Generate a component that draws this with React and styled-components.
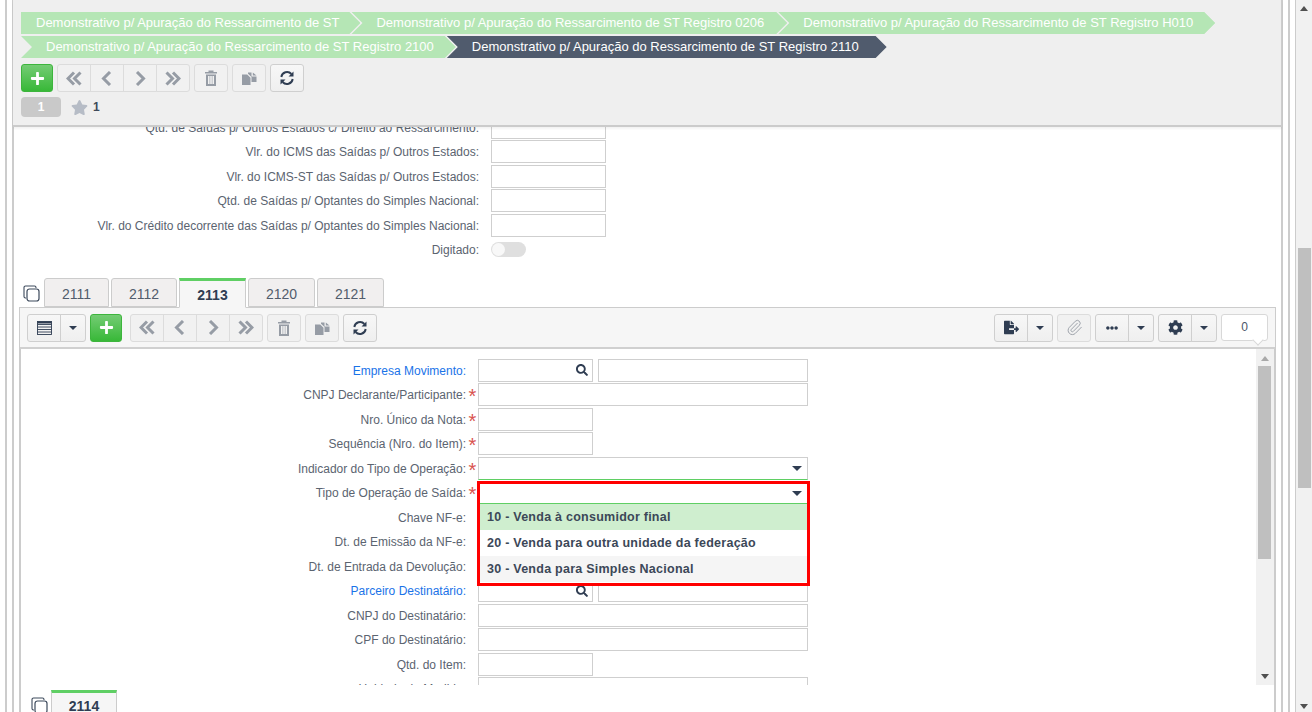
import React from "react";
import styled, { createGlobalStyle } from "styled-components";
import { FaCog, FaEllipsisH, FaFileExport, FaPlus, FaSearch, FaStar } from "react-icons/fa";
import { Paperclip } from "lucide-react";

const Global = createGlobalStyle`
  html, body { margin: 0; padding: 0; overflow: hidden; background: #fff; }
  * { box-sizing: border-box; }
  body { font-family: "Liberation Sans", Arial, sans-serif; font-size: 12px; color: #5b6470; }
`;

const Page = styled.div`
  width: 1312px; height: 712px; display: flex; overflow: hidden; background: #fff;
`;
const PageBody = styled.div`flex: 1; min-width: 0; padding-left: 5px; display: flex;`;
const FrameOuter = styled.div`
  flex: 1; min-width: 0; display: flex; padding: 0 5px;
  border-left: 2px solid #ccc; border-right: 1px solid #ccc;
`;
const FrameMiddle = styled.div`
  flex: 1; min-width: 0; display: flex; padding-right: 5px;
  border-left: 2px solid #ccc; border-right: 2px solid #ccc;
`;
const FrameInner = styled.div`
  flex: 1; min-width: 0; display: flex; flex-direction: column; border-right: 2px solid #ccc;
`;

const PageScroll = styled.div`
  width: 16px; position: relative; background: #f1f1f1; flex: none;
`;
const PageThumb = styled.div`
  position: absolute; left: 2px; top: 248px; width: 13px; height: 240px; background: #bfbfbf;
`;
const Arrow = styled.div`
  position: absolute; left: ${p => p.$left}px;
  ${p => p.$up ? `top: ${p.$offset}px;` : `bottom: ${p.$offset}px;`}
  width: 0; height: 0; border-left: 4px solid transparent; border-right: 4px solid transparent;
  ${p => p.$up ? `border-bottom: 5px solid ${p.$color};` : `border-top: 5px solid ${p.$color};`}
`;

const Header = styled.header`
  height: 127px; flex: none; margin: 0 -1px 0 -1px; padding: 12px 0 0 8px; background: #efefef;
  border-bottom: 2px solid #cbcbcb; border-right: 1px solid #ccc;
  box-shadow: 0 2px 2px rgba(0,0,0,.05); position: relative; z-index: 2;
`;
const Crumbs = styled.div`display: flex; margin-bottom: 2px;`;
const Crumb = styled.div`
  height: 22px; line-height: 22px; font-size: 13px; white-space: nowrap; color: #fff;
  background: ${p => p.$active ? "#505b6d" : "#b5e6b5"};
  padding: 0 ${p => p.$pr || 21}px 0 ${p => p.$flat ? 15 : 25}px;
  margin-left: ${p => p.$first ? 0 : -9}px;
  clip-path: ${p => p.$flat
    ? "polygon(0 0, calc(100% - 11px) 0, 100% 50%, calc(100% - 11px) 100%, 0 100%)"
    : "polygon(0 0, calc(100% - 11px) 0, 100% 50%, calc(100% - 11px) 100%, 0 100%, 11px 50%)"};
`;
const Toolbar = styled.div`
  display: flex; gap: 4px; align-items: flex-start; margin-top: 6px;
`;
const BtnGroup = styled.div`display: flex;`;
const Btn = styled.button`
  width: ${p => p.$w || 34}px; height: 28px; padding: 0; display: flex; align-items: center; justify-content: center;
  background: ${p => p.$muted ? "#f1f1f1" : "linear-gradient(#f7f7f7, #efefef)"};
  border: 1px solid ${p => p.$muted ? "#dcdcdc" : "#cfcfcf"}; border-radius: 3px;
  color: ${p => p.$muted ? "#969ca5" : "#2f3d52"}; font-size: ${p => p.$fs || 15}px;
  ${BtnGroup} > & { border-radius: 0; margin-left: -1px; }
  ${BtnGroup} > &:first-child { border-radius: 3px 0 0 3px; margin-left: 0; }
  ${BtnGroup} > &:last-child { border-radius: 0 3px 3px 0; }
`;
const AddBtn = styled.button`
  width: 32px; height: 28px; padding: 0; display: flex; align-items: center; justify-content: center;
  border: 1px solid #3db53d; border-radius: 3px; color: #fff; font-size: 15px;
  background: linear-gradient(#74cc74, #38b838);
`;
const Caret = styled.span`
  width: 0; height: 0; border-left: 4px solid transparent; border-right: 4px solid transparent;
  border-top: 4px solid #2f3d52; display: block;
`;
const SelectCaret = styled(Caret)`
  border-left-width: 5.5px; border-right-width: 5.5px; border-top-width: 5px;
`;
const Spacer = styled.div`flex: 1;`;
const NavGap = styled.div`width: 0; flex: none;`;
const CountBox = styled.div`
  width: 47px; height: 27px; background: #fff; border: 1px solid #d8d8d8; border-radius: 3px; position: relative;
  display: flex; align-items: center; justify-content: center; color: #4a5668; font-size: 12px;
  &::after {
    content: ""; position: absolute; left: 32px; bottom: -4px; width: 7px; height: 7px; background: #fff;
    border-right: 1px solid #d8d8d8; border-bottom: 1px solid #d8d8d8; transform: rotate(45deg);
  }
`;
const StatusRow = styled.div`display: flex; align-items: center; margin-top: 5px; height: 20px;`;
const Badge = styled.div`
  width: 40px; height: 20px; border-radius: 4px; background: #c9c9c9; color: #fff; font-weight: bold;
  display: flex; align-items: center; justify-content: center; font-size: 12px;
`;
const StarBox = styled.div`
  margin-left: 10px; display: flex; align-items: center; gap: 5px; color: #3f4a5a; font-weight: bold; font-size: 12px;
  svg { color: #b6bcc6; font-size: 17px; }
`;

const Content = styled.main`
  flex: 1; min-height: 0; overflow: hidden; background: #fff; display: flex; flex-direction: column;
  position: relative; z-index: 1;
`;
const UpperForm = styled.section`margin-top: -12px; flex: none;`;
const UpperRow = styled.div`height: 24.5px; display: flex; align-items: center;`;
const UpperLabel = styled.label`
  width: 465px; text-align: right; flex: none; padding-top: ${p => p.$flush ? 0 : 1}px;
`;
const UpperInput = styled.div`
  width: 115px; height: 23px; margin-left: 12px; border: 1px solid #cfcfcf; background: #fff;
`;
const Toggle = styled.div`
  width: 35px; height: 15px; margin-left: 12px; border-radius: 8px; background: #dfdfdf;
  position: relative;
  &::after {
    content: ""; position: absolute; left: 1px; top: 1px; width: 13px; height: 13px; border-radius: 50%; background: #f8f8f8;
  }
`;
const TabStrip = styled.div`
  height: ${p => p.$h || 29}px; flex: none; display: flex; align-items: flex-start; gap: ${p => p.$gap || 2}px;
  margin: ${p => p.$mt || 0}px 0 0 ${p => p.$ml || 0}px;
  position: relative; z-index: 1;
`;
const CopyGlyph = styled.svg`width: 17px; height: 17px; margin: 7px 2px 0 0; flex: none; color: #3d4a5c;`;
const Tab = styled.div`
  height: ${p => p.$h || (p.$active ? 30 : 29)}px; width: ${p => p.$w || 66}px; border: 1px solid #ccc; border-radius: 3px 3px 0 0;
  display: flex; align-items: center; justify-content: center; font-size: 14px; padding-top: ${p => p.$pt || (p.$active ? 2 : 4)}px;
  color: ${p => p.$active ? "#2f3d52" : "#515c6c"}; font-weight: ${p => p.$active ? "bold" : "normal"};
  background: ${p => p.$active ? "#f6f6f6" : "#f1efef"};
  border-bottom-color: ${p => p.$active ? "transparent" : "#ccc"};
  ${p => p.$active ? "border-top: 3px solid #5fcf64; border-radius: 0;" : ""}
`;
const Panel = styled.section`
  flex: 1; min-height: 0; margin: 0 5px; border: 2px solid #ccc; border-top: 1px solid #ccc; border-bottom: 0;
  display: flex; flex-direction: column;
`;
const PanelBar = styled.div`
  height: 41px; flex: none; padding: 6px 7px 0 7px; background: #f6f6f6; border-bottom: 2px solid #d0d0d0; display: flex; gap: 4px; align-items: flex-start;
  margin: 0 -1px 0 -1px;
`;
const Viewport = styled.div`height: 336px; flex: none; display: flex; overflow: hidden;`;
const FormArea = styled.div`flex: 1; min-width: 0; position: relative; overflow: hidden; padding-top: 10px;`;
const Row = styled.div`height: 24.5px; display: flex; align-items: flex-start;`;
const FieldLabel = styled.label`
  width: 445px; flex: none; text-align: right; line-height: 25px; color: ${p => p.$link ? "#1a73e8" : "#5b6470"};
`;
const Required = styled.span`
  width: 12px; flex: none; color: #d9534f; font-size: 20px; line-height: 27px; height: 23px; padding-left: 2.5px;
`;
const Field = styled.div`
  width: ${p => p.$w}px; height: 23px; border: 1px solid #cfcfcf; background: #fff; position: relative; flex: none;
  margin-left: ${p => p.$ml || 0}px; display: flex; align-items: center; justify-content: flex-end;
  padding-right: ${p => p.$pr || 0}px; color: #2f3d52; font-size: 12px;
  ${p => p.$focus ? "border-bottom-color: #5fcf64;" : ""}
`;
const Track = styled.div`width: 18px; flex: none; background: #f1f1f1; position: relative;`;
const Thumb = styled.div`position: absolute; left: 2px; top: 17px; width: 13px; height: 193px; background: #bfbfbf;`;
const Dropdown = styled.div`
  position: absolute; left: 456px; top: 132px; width: 333px; height: 105px; border: 3px solid #f00; background: #fff; z-index: 3;
`;
const DropHead = styled.div`
  height: 20px; border-bottom: 1px solid #5fcf64; display: flex; align-items: center; justify-content: flex-end; padding-right: 5px;
`;
const Option = styled.div`
  height: 26px; line-height: 26px; padding-left: 7px; font-weight: bold; font-size: 12.5px; letter-spacing: .25px; color: #3c4858;
  background: ${p => p.$bg || "#fff"};
`;

const TableGlyph = () => (
  <svg width="15" height="14" viewBox="0 0 15 14" fill="none" stroke="#2f3d52" strokeWidth=".9">
    <rect x=".5" y=".5" width="14" height="13" />
    <path d="M.5 3.5h14M.5 6h14M.5 8.5h14M.5 11h14" />
    <path d="M.5 1.5h14" strokeWidth="2" />
  </svg>
);
const Copy2 = () => (
  <CopyGlyph viewBox="0 0 17 17" fill="none" stroke="currentColor" strokeWidth="1.1">
    <path d="M3 13 H2.5 A1.5 1.5 0 0 1 1 11.5 V2.5 A1.5 1.5 0 0 1 2.5 1 H11.5 A1.5 1.5 0 0 1 13 2.5 V3" />
    <rect x="4" y="4" width="12" height="12" rx="2.5" strokeWidth="1.2" />
  </CopyGlyph>
);
const Chevron = ({ dir, double }) => {
  const flip = dir === "left" ? "translate(16 0) scale(-1 1)" : undefined;
  return (
    <svg width="16" height="15" viewBox="0 0 16 15" fill="none" stroke="currentColor" strokeWidth="3">
      <g transform={flip}>
        {double ? (
          <>
            <path d="M1.5 1.5 L7.5 7.5 L1.5 13.5" />
            <path d="M8 1.5 L14 7.5 L8 13.5" />
          </>
        ) : (
          <path d="M5 1 L11.5 7.5 L5 14" />
        )}
      </g>
    </svg>
  );
};
const TrashGlyph = () => (
  <svg width="14" height="16" viewBox="0 0 14 16" fill="currentColor">
    <path d="M4.5 0.5h5v1.5H13v1.5H1V2h3.5z" />
    <path fillRule="evenodd" d="M2 4.5h10V16H2z M4 6v8h1.6V6z M6.2 6v8h1.6V6z M8.4 6v8H10V6z" />
  </svg>
);
const DocsGlyph = () => (
  <svg width="15" height="14" viewBox="0 0 15 14" fill="currentColor">
    <path d="M0 3.5h5.2L8.5 6.8V14H0z" />
    <path d="M6 1.5 H9.5 V5.5 H14.5 V11 H9.5 V6 L6 2.8z" />
    <path d="M10.8 1.5 L14.5 4.4 H10.8z" />
  </svg>
);
const RefreshGlyph = () => (
  <svg width="16" height="16" viewBox="0 0 16 16" fill="none" stroke="currentColor" strokeWidth="1.9">
    <path d="M2.3 7 A5.8 5.8 0 0 1 12.4 4" />
    <path d="M13.7 9 A5.8 5.8 0 0 1 3.6 12" />
    <path d="M14.5 1.5v5h-5z M1.5 14.5v-5h5z" fill="currentColor" stroke="none" />
  </svg>
);
const Nav = () => (
  <BtnGroup>
    <Btn $muted><Chevron dir="left" double /></Btn>
    <Btn $muted><Chevron dir="left" /></Btn>
    <Btn $muted><Chevron dir="right" /></Btn>
    <Btn $muted><Chevron dir="right" double /></Btn>
  </BtnGroup>
);
const Actions = () => (
  <>
    <Btn $muted><TrashGlyph /></Btn>
    <Btn $muted><DocsGlyph /></Btn>
    <Btn><RefreshGlyph /></Btn>
  </>
);

const upper = [
  "Qtd. de Saídas p/ Outros Estados c/ Direito ao Ressarcimento:",
  "Vlr. do ICMS das Saídas p/ Outros Estados:",
  "Vlr. do ICMS-ST das Saídas p/ Outros Estados:",
  "Qtd. de Saídas p/ Optantes do Simples Nacional:",
  "Vlr. do Crédito decorrente das Saídas p/ Optantes do Simples Nacional:",
];
const W = 330, S = 115;
const rows = [
  { l: "Empresa Movimento:", link: true, lookup: true },
  { l: "CNPJ Declarante/Participante:", req: true, w: W },
  { l: "Nro. Único da Nota:", req: true, w: S },
  { l: "Sequência (Nro. do Item):", req: true, w: S },
  { l: "Indicador do Tipo de Operação:", req: true, w: W, select: true },
  { l: "Tipo de Operação de Saída:", req: true, w: W, select: true },
  { l: "Chave NF-e:", w: W },
  { l: "Dt. de Emissão da NF-e:", w: S },
  { l: "Dt. de Entrada da Devolução:", w: S },
  { l: "Parceiro Destinatário:", link: true, lookup: true },
  { l: "CNPJ do Destinatário:", w: W },
  { l: "CPF do Destinatário:", w: W },
  { l: "Qtd. do Item:", w: S },
  { l: "Unidade de Medida:", w: W },
];

export default function App() {
  return (
    <Page>
      <Global />
      <PageBody>
        <FrameOuter>
          <FrameMiddle>
            <FrameInner>
              <Header>
                <Crumbs>
                  <Crumb $flat $first>Demonstrativo p/ Apuração do Ressarcimento de ST</Crumb>
                  <Crumb $pr={23}>Demonstrativo p/ Apuração do Ressarcimento de ST Registro 0206</Crumb>
                  <Crumb $pr={22}>Demonstrativo p/ Apuração do Ressarcimento de ST Registro H010</Crumb>
                </Crumbs>
                <Crumbs>
                  <Crumb $first $pr={22}>Demonstrativo p/ Apuração do Ressarcimento de ST Registro 2100</Crumb>
                  <Crumb $active $pr={28}>Demonstrativo p/ Apuração do Ressarcimento de ST Registro 2110</Crumb>
                </Crumbs>
                <Toolbar>
                  <AddBtn><FaPlus /></AddBtn>
                  <Nav />
                  <Actions />
                </Toolbar>
                <StatusRow>
                  <Badge>1</Badge>
                  <StarBox><FaStar />1</StarBox>
                </StatusRow>
              </Header>
              <Content>
                <UpperForm>
                  {upper.map(t => (
                    <UpperRow key={t}><UpperLabel>{t}</UpperLabel><UpperInput /></UpperRow>
                  ))}
                  <UpperRow><UpperLabel $flush>Digitado:</UpperLabel><Toggle /></UpperRow>
                </UpperForm>
                <TabStrip $mt={15.5} $ml={9}>
                  <Copy2 />
                  <Tab $w={65}>2111</Tab>
                  <Tab>2112</Tab>
                  <Tab $active $w={67}>2113</Tab>
                  <Tab $w={67}>2120</Tab>
                  <Tab $w={67}>2121</Tab>
                </TabStrip>
                <Panel>
                  <PanelBar>
                    <BtnGroup>
                      <Btn><TableGlyph /></Btn>
                      <Btn $w={26}><Caret /></Btn>
                    </BtnGroup>
                    <AddBtn><FaPlus /></AddBtn>
                    <NavGap />
                    <Nav />
                    <Actions />
                    <Spacer />
                    <BtnGroup>
                      <Btn><FaFileExport /></Btn>
                      <Btn $w={26}><Caret /></Btn>
                    </BtnGroup>
                    <Btn $muted><Paperclip size={17} strokeWidth={1.3} /></Btn>
                    <BtnGroup>
                      <Btn $fs={12}><FaEllipsisH /></Btn>
                      <Btn $w={26}><Caret /></Btn>
                    </BtnGroup>
                    <BtnGroup>
                      <Btn><FaCog /></Btn>
                      <Btn $w={26}><Caret /></Btn>
                    </BtnGroup>
                    <CountBox>0</CountBox>
                  </PanelBar>
                  <Viewport>
                    <FormArea>
                      {rows.map(r => (
                        <Row key={r.l}>
                          <FieldLabel $link={r.link}>{r.l}</FieldLabel>
                          <Required>{r.req ? "*" : ""}</Required>
                          {r.lookup ? (
                            <>
                              <Field $w={115} $pr={4}><FaSearch size={12} /></Field>
                              <Field $w={210} $ml={5} />
                            </>
                          ) : (
                            <Field $w={r.w} $pr={5} $focus={r.select}>{r.select ? <SelectCaret /> : null}</Field>
                          )}
                        </Row>
                      ))}
                      <Dropdown>
                        <DropHead><SelectCaret /></DropHead>
                        <Option $bg="#cfeecf">10 - Venda à consumidor final</Option>
                        <Option>20 - Venda para outra unidade da federação</Option>
                        <Option $bg="#f5f5f5">30 - Venda para Simples Nacional</Option>
                      </Dropdown>
                    </FormArea>
                    <Track>
                      <Arrow $up $left={5} $offset={7} $color="#a9a9a9" />
                      <Thumb />
                      <Arrow $left={5} $offset={6} $color="#505050" />
                    </Track>
                  </Viewport>
                  <TabStrip $mt={5} $ml={10} $h={25} $gap={1}>
                    <Copy2 />
                    <Tab $active $w={66} $h={25} $pt={6}>2114</Tab>
                  </TabStrip>
                </Panel>
              </Content>
            </FrameInner>
          </FrameMiddle>
        </FrameOuter>
      </PageBody>
      <PageScroll>
        <Arrow $up $left={4} $offset={6} $color="#505050" />
        <PageThumb />
        <Arrow $left={4} $offset={3} $color="#505050" />
      </PageScroll>
    </Page>
  );
}
